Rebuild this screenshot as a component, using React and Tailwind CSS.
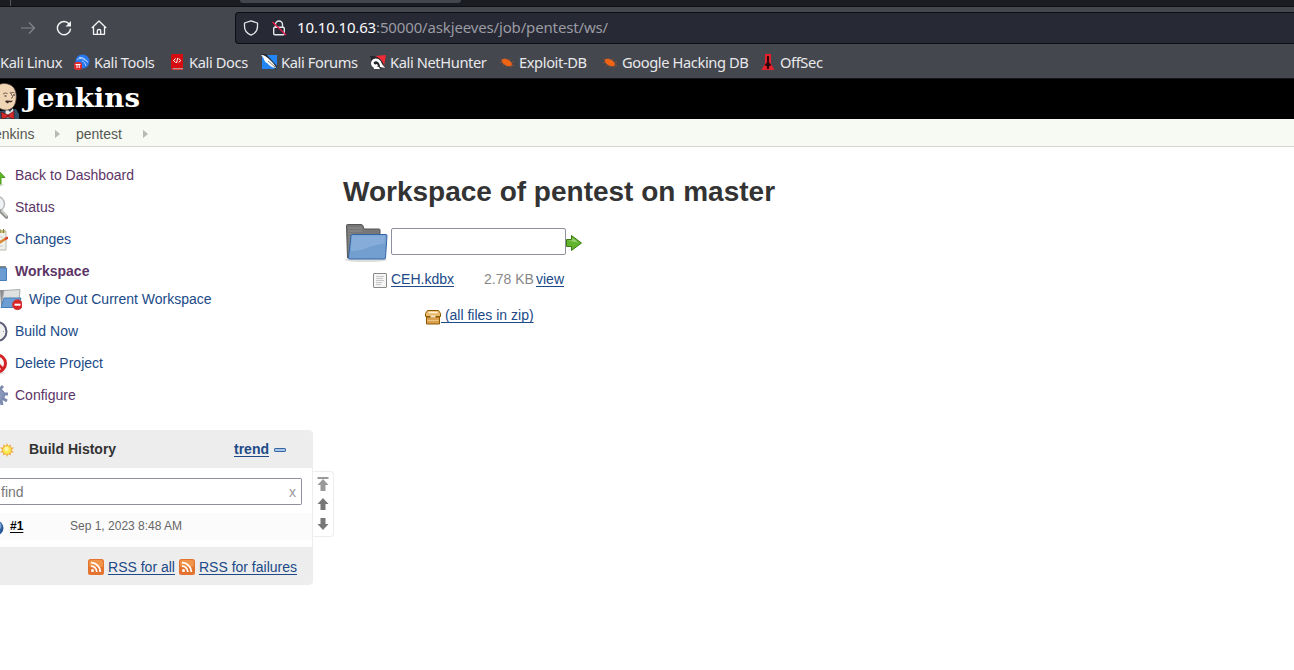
import React from "react";

const link = "text-[#204a87] underline decoration-1 underline-offset-2 [text-decoration-skip-ink:none]";

function ToolsIcon() {
  return (
    <svg className="size-4 shrink-0" viewBox="0 0 16 16">
      <circle cx="8.5" cy="7.5" r="7" fill="#2777ee" />
      <path d="M3 5.500c4-2 7-1 11 3M5 3.500c3-.5 6 1 8 4M8 7c2 .5 3 2 4 5" stroke="#c3dbff" strokeWidth=".9" fill="none" />
      <rect x="0" y="8" width="8" height="8" rx="3" fill="#e22a2e" />
      <path d="M1.500 10.500h5M3 10.500v3.500M5.200 10.500v3.500" stroke="#fff" strokeWidth="1" />
    </svg>
  );
}

function DocsIcon() {
  return (
    <svg className="size-4 shrink-0" viewBox="0 0 16 16">
      <path d="M2 1.500Q2 0 3.500 0H14v14H4q-1 0-1 1h11v1H3.500Q2 16 2 14.500z" fill="#d60d10" />
      <path d="M3.500 14.800H14" stroke="#e9b5b0" strokeWidth="1" />
      <path d="M6.700 4.500 4.500 6.500l2.200 2M9.600 4.500l2.200 2-2.200 2M8.800 4 7.500 9" stroke="#fff" strokeWidth="1" fill="none" />
    </svg>
  );
}

function ForumsIcon() {
  return (
    <svg className="size-4 shrink-0" viewBox="0 0 16 16">
      <path d="M1 1h15v14H1z" fill="#2386f4" />
      <path d="M0 0h5l11 12-1 4z" fill="#24262d" />
      <path d="M0 1c4 0 6 2 9 5 3 3 5 5 6 8-4 0-7-3-9-5C3 8 4 5 0 1z" fill="#fff" />
      <path d="M7 7l7 6" stroke="#4b5058" strokeWidth=".7" />
    </svg>
  );
}

function NetHunterIcon() {
  return (
    <svg className="size-4 shrink-0" viewBox="0 0 16 16">
      <path d="M0 2l5 0 8 2 1 10-10 1z" fill="#24262b" />
      <path d="M5 2l11-1-2 11C13 7 10 4 5 2z" fill="#ef2b35" />
      <path d="M1 9C2 3 10 3 12 10l3 4-5-1C10 8 6 6 4 8c-1 2 1 3 3 2l1 2c-4 3-7 1-7-3z" fill="#fff" />
      <path d="M3 12l6 1 1 2H4z" fill="#fff" />
    </svg>
  );
}

function BugIcon() {
  return (
    <svg className="size-4 shrink-0" viewBox="0 0 16 16">
      <ellipse cx="7.800" cy="8.500" rx="5.600" ry="3" transform="rotate(28 7.800 8.500)" fill="#ef6414" />
      <path d="M4 6.500 1.500 5M3.500 8 1 9M5.500 10.500 3.500 12M8.500 12l-1.500 1.500M7 5.500 6.500 4M10 7l1-2.500M12 9l3-1.500M12.500 11l2.500.5M11.500 12l1 1.500" stroke="#a8552b" strokeWidth=".7" />
    </svg>
  );
}

function OffSecIcon() {
  return (
    <svg className="size-4 shrink-0" viewBox="0 0 16 16">
      <path d="M5 0h6v9.500l3.500 6.500H1.500L5 9.500z" fill="#e3202b" />
      <path d="M7 2h2v6.500l2.500 2.500-2.500 1.500V15H7v-2.500L4.500 11 7 8.500z" fill="#28080b" />
    </svg>
  );
}

const bookmarks = [
  { label: "Kali Tools", icon: ToolsIcon, cls: "w-[95px]" },
  { label: "Kali Docs", icon: DocsIcon, cls: "w-[92px]" },
  { label: "Kali Forums", icon: ForumsIcon, cls: "w-[109px]" },
  { label: "Kali NetHunter", icon: NetHunterIcon, cls: "w-[129px]" },
  { label: "Exploit-DB", icon: BugIcon, cls: "w-[103px]" },
  { label: "Google Hacking DB", icon: BugIcon, cls: "w-[158px]" },
  { label: "OffSec", icon: OffSecIcon, cls: "w-[80px]" },
];

function BrowserChrome() {
  return (
    <div className="font-['Noto_Sans',sans-serif] text-[14.67px] text-[#e9e9ec]">
      <div className="flex h-1.5 bg-[#1b1c21]">
        <div className="h-1.5 w-[11px] border-r border-[#55575d]" />
        <div className="ml-[229px] h-[3px] w-[221px] rounded-b bg-[#43454c]" />
      </div>
      <div className="flex h-[42px] items-center border-t border-[#0e0f12] bg-[#44474e]">
        <svg className="ml-5 size-4 shrink-0" viewBox="0 0 16 16" fill="none" stroke="#85878c" strokeWidth="1.2">
          <path d="M1 8h13.500M9 2.500 14.500 8 9 13.500" />
        </svg>
        <svg className="ml-5 size-4 shrink-0" viewBox="0 0 16 16" fill="none" stroke="#f4f4f6" strokeWidth="1.4">
          <path d="M13.200 4A6.600 6.600 0 1 0 14.600 8.600" />
          <path d="M15 1v5.500H9.500z" fill="#f4f4f6" stroke="none" />
        </svg>
        <svg className="ml-[19px] size-4 shrink-0" viewBox="0 0 16 16" fill="none" stroke="#f4f4f6" strokeWidth="1.3" strokeLinejoin="round">
          <path d="M.8 8 8 1l7.200 7M2.500 7v7.300h11V7" />
          <path d="M6.300 14.300v-3.600q0-1.200 1.700-1.200t1.700 1.200v3.600" />
        </svg>
        <div className="ml-32 flex h-8 min-w-0 flex-1 items-center rounded-l border border-r-0 border-[#0d0e13] bg-[#272935]">
          <svg className="ml-[7px] size-4 shrink-0" viewBox="0 0 16 16" fill="none" stroke="#e6e6ea" strokeWidth="1.3" strokeLinejoin="round">
            <path d="M8 .8 14.500 3v3.500c0 4-2.500 7-6.500 8.700C4 13.500 1.500 10.500 1.500 6.500V3z" />
          </svg>
          <svg className="ml-3 size-4 shrink-0" viewBox="0 0 16 16" fill="none" stroke="#e6e6ea" strokeWidth="1.4">
            <path d="M4.500 7V4.500a3.500 3.500 0 0 1 7 0V7" />
            <rect x="2.700" y="7.300" width="10.600" height="7.500" rx="1.200" />
            <path d="M1.500 2 15 15" stroke="#e5194c" />
          </svg>
          <span className="ml-2.5 text-[15px] tracking-[-0.15px] whitespace-nowrap text-[#9b9ba2]">
            <span className="text-[#fbfbfe]">10.10.10.63</span>:50000/askjeeves/job/pentest/ws/
          </span>
        </div>
      </div>
      <div className="flex h-[31px] items-center border-b border-[#15161a] bg-[#44474e] pb-0.5 tracking-[-0.39px]">
        <span className="w-[74px] shrink-0 whitespace-nowrap">Kali Linux</span>
        {bookmarks.map(({ label, icon: Icon, cls }) => (
          <div key={label} className={`flex shrink-0 items-center gap-1 whitespace-nowrap ${cls}`}>
            <Icon />
            <span>{label}</span>
          </div>
        ))}
      </div>
    </div>
  );
}

function Logo() {
  return (
    <svg className="block h-10 w-[150px]" viewBox="0 0 150 40">
      <path d="M-3 40 0 32l9-1 7-1 3 5v5z" fill="#2f5068" />
      <path d="M6 29l4 4 3-4 1 10H5z" fill="#e9ecec" />
      <path d="M-5 12C-4 3 7 3 12 7c5 4 5 12 3 18-3 7-11 8-17 3z" fill="#f0d5b5" stroke="#54423a" strokeWidth=".8" />
      <path d="M3 15q2-2 4.500-.5M11 14q2-1.500 3.500 0M10 13l3 5-2 1.500" fill="none" stroke="#54423a" strokeWidth=".8" />
      <path d="M4.500 17h2M13 16h2" stroke="#222" strokeWidth="1.200" />
      <path d="M5 22c3-1.500 5 .5 8-.5-1 2-3 2-4 1.500l-1 1.500-2-1z" fill="#3f2c26" />
      <path d="M1 33l7 3v2l-6 2zM14 32l-6 4v2l6 2z" fill="#d62b2c" stroke="#651314" strokeWidth=".7" />
      <text x="24" y="28" textLength="116" lengthAdjust="spacingAndGlyphs" fill="#fff" fontSize="26" fontWeight="700" fontFamily="'DejaVu Serif', serif">Jenkins</text>
    </svg>
  );
}

function Crumb() {
  return (
    <svg className="h-2 w-[5px] shrink-0" viewBox="0 0 5 8">
      <path d="M0 0l5 4-5 4z" fill="#b5b8b3" />
    </svg>
  );
}

const taskIcons = {
  up: (
    <>
      <ellipse cx="12" cy="22" rx="8" ry="1.500" fill="#d8ddd5" />
      <path d="M12 5 21 14.500h-4V21H7v-6.500H3z" fill="#5cb524" stroke="#4f9a1d" />
    </>
  ),
  search: (
    <>
      <circle cx="13" cy="9" r="7.500" fill="#eef2f4" stroke="#b8bbb9" strokeWidth="1.500" />
      <path d="M16.500 16l6 6" stroke="#8c8e8a" strokeWidth="3.500" strokeLinecap="round" />
      <path d="M17 15.500l6 6" stroke="#d5d6d3" strokeWidth="1.300" />
    </>
  ),
  notepad: (
    <>
      <path d="M4 4h18v19H4z" fill="#f0f0ea" stroke="#b9b9b1" />
      <path d="M4 3h17v3H4z" fill="#c5bb7a" />
      <path d="M8 2v4M12 2v4M16 2v4M19.500 2v4" stroke="#857d3b" />
      <path d="M7 10h12M7 19h12" stroke="#c7c9c5" />
      <path d="M13 17 22 11.500" stroke="#d9862f" strokeWidth="2.500" />
      <path d="M21 12l3-1.500" stroke="#d94235" strokeWidth="2.500" />
    </>
  ),
  folder: (
    <>
      <path d="M2 5h8l2 2h10v12H2z" fill="#888" />
      <path d="M2 9h20.500v12.500H2z" fill="#6c9dd2" stroke="#467db9" />
    </>
  ),
  wipe: (
    <>
      <path d="M2 3h8l1 2h8v15H3z" fill="#8b8f8f" />
      <path d="M6 3.500l16-1-1 12H4z" fill="#dfe1e1" stroke="#a8acac" />
      <path d="M6 11h17l-2.500 9.500H3z" fill="#6d9ed3" stroke="#477fb9" />
      <circle cx="19.500" cy="17.700" r="5" fill="#d92426" stroke="#c04345" />
      <path d="M16.500 17.700h6" stroke="#fff" strokeWidth="2" />
    </>
  ),
  clock: (
    <>
      <circle cx="13" cy="12.500" r="9.500" fill="#f0f0ee" stroke="#5c5b78" strokeWidth="2" />
      <path d="M12 6v7l4 2M20 12.500h-1" stroke="#999" fill="none" />
    </>
  ),
  no: (
    <>
      <ellipse cx="13" cy="22" rx="8" ry="1.500" fill="#ddd" />
      <circle cx="13" cy="12.500" r="8.500" fill="#f6f6f5" stroke="#d52224" strokeWidth="3" />
      <path d="M8 7l11 11" stroke="#d52224" strokeWidth="3" />
    </>
  ),
  gear: (
    <>
      <circle cx="14" cy="12" r="6.500" fill="#8997bb" stroke="#66759c" />
      <path d="M14 2v4M17 17l1 5M20 11h4M16 6l3-3M18 15l5 3" stroke="#7d8bb0" strokeWidth="3" />
      <circle cx="13" cy="12" r="3" fill="#b9c3dc" />
    </>
  ),
};

const tasks = [
  { label: "Back to Dashboard", icon: "up", cls: "text-[#5c3566] h-8 -ml-4" },
  { label: "Status", icon: "search", cls: "text-[#5c3566] h-8 -ml-4" },
  { label: "Changes", icon: "notepad", cls: "text-[#204a87] h-8 -ml-4" },
  { label: "Workspace", icon: "folder", cls: "text-[#5c3566] h-7 pt-1 -ml-4 font-bold" },
  { label: "Wipe Out Current Workspace", icon: "wipe", cls: "text-[#204a87] h-8 -ml-0.5" },
  { label: "Build Now", icon: "clock", cls: "text-[#204a87] h-8 -ml-4" },
  { label: "Delete Project", icon: "no", cls: "text-[#204a87] h-8 -ml-4" },
  { label: "Configure", icon: "gear", cls: "text-[#5c3566] h-8 -ml-4" },
];

function RssIcon() {
  return (
    <svg className="size-4 shrink-0" viewBox="0 0 16 16">
      <rect width="16" height="16" rx="2.500" fill="#e57330" />
      <rect x="1" y="1" width="14" height="7" rx="2" fill="#f09449" />
      <circle cx="4.500" cy="11.500" r="1.500" fill="#fff" />
      <path d="M3 7.200a5.800 5.800 0 0 1 5.800 5.800M3 3.700A9.300 9.300 0 0 1 12.300 13" fill="none" stroke="#fff" strokeWidth="1.800" />
    </svg>
  );
}

function BuildHistory() {
  return (
    <div className="mt-[19px] flex items-start">
      <div className="w-[313px] shrink-0 rounded-r border-r border-[#ededed]">
        <div className="flex h-[38px] items-center rounded-tr bg-[#ededed] font-bold">
          <svg className="mt-0.5 -ml-px size-4 shrink-0" viewBox="0 0 16 16">
            <path d="M8 1l1.200 3 2.800-1.500L11.500 5.500 15 5.500 12.500 8 15 10.500l-3.500 0 .5 3L9.200 12 8 15l-1.200-3L4 13.500l.5-3-3.500 0L3.500 8 1 5.500l3.500 0L4 2.500 6.800 4z" fill="#f4a83c" />
            <circle cx="8" cy="8" r="4.300" fill="#fce94f" stroke="#eeb13d" strokeWidth=".7" />
            <circle cx="7.500" cy="7" r="2.200" fill="#fff6a6" />
          </svg>
          <span className="ml-3.5 w-[205px]">Build History</span>
          <span className={link}>trend</span>
          <svg className="mt-0.5 ml-[5px] h-1 w-3" viewBox="0 0 12 4">
            <rect x=".5" y=".5" width="11" height="3" rx=".6" fill="#a9c4e4" stroke="#3465a4" />
          </svg>
        </div>
        <div className="pt-2.5 pb-2">
          <div className="flex h-[27px] w-[302px] items-center justify-between rounded-r-xs border border-l-0 border-[#8f8f9d] pr-[5px] pl-px text-[#777]">
            <span>find</span>
            <span className="text-[#999]">x</span>
          </div>
        </div>
        <div className="mb-[7px] flex h-[27px] items-center bg-[#fbfbfb] text-xs">
          <svg className="mt-0.5 -ml-3 size-4 shrink-0" viewBox="0 0 16 16">
            <circle cx="8" cy="8" r="7.500" fill="#2b5a99" />
            <circle cx="9" cy="6" r="4.500" fill="#7ba3d6" />
          </svg>
          <span className="ml-1.5 w-[60px] pb-0.5 font-bold text-black underline underline-offset-2 [text-decoration-skip-ink:none]">#1</span>
          <span className="pb-0.5 text-[#666]">Sep 1, 2023 8:48 AM</span>
        </div>
        <div className="flex h-[38px] items-center justify-end gap-1 rounded-br bg-[#ededed] pt-0.5 pr-[15px]">
          <RssIcon />
          <span className={link}>RSS for all</span>
          <RssIcon />
          <span className={link}>RSS for failures</span>
        </div>
      </div>
      <div className="mt-[41px] flex h-[66px] w-[21px] flex-col items-center rounded-r border border-l-0 border-[#ededed] pt-[5px]">
        <svg className="h-[54px] w-3" viewBox="0 0 12 54" fill="#777">
          <path d="M.5 0h11v2H.500zM6 2l5.500 6H8.500v6h-5V8H.500z" fill="#999" />
          <path d="M6 21l5.500 6H8.500v6h-5v-6H.500zM3.500 41h5v6h3L6 53 .500 47h3z" />
        </svg>
      </div>
    </div>
  );
}

function Workspace() {
  return (
    <main className="ml-[9px] pt-[26px]">
      <h1 className="h-[37px] text-[28px] leading-[37px] font-bold whitespace-nowrap text-[#333]">Workspace of pentest on master</h1>
      <div className="mt-3 flex h-[39px] items-center">
        <svg className="mt-1 ml-px h-10 w-[47px] shrink-0" viewBox="0 0 47 40">
          <ellipse cx="22" cy="36" rx="21" ry="2" fill="#ddd" />
          <path d="M2.500 1.500q0-1 1-1h14q1 0 1.500 1.500l1 3h15q1 0 1 1V34H3.500z" fill="#777" stroke="#555" />
          <path d="M4 4h14M4 7h14M4 10h5M4 13h4M4 16h4M4 19h3M4 22h3M4 25h3" stroke="#909090" />
          <path d="M8 10.500h34q1 0 1 1L41.500 34q0 1-1.500 1H6q-1.500 0-1.500-1.500L7 11.500q0-1 1-1z" fill="#729fcf" stroke="#3465a4" />
          <path d="M8 11.500h33l-.5 8Q30 21 23 24T7 27z" fill="#86add9" />
        </svg>
        <div className="h-[27px] w-[175px] rounded-xs border border-[#8f8f9d] bg-white" />
        <svg className="mt-0.5 size-4" viewBox="0 0 16 16">
          <path d="M.5 4.500h5v-4L15.500 8l-10 7.500v-4h-5z" fill="#63b32c" stroke="#3c7c12" />
          <path d="M1.500 5.500h5V3L12 7.500z" fill="#a0d57e" />
        </svg>
      </div>
      <div className="mt-1.5 flex h-6 items-center">
        <svg className="mt-[3px] ml-[30px] h-[15px] w-3.5" viewBox="0 0 14 15">
          <rect x=".5" y=".5" width="13" height="14" rx=".5" fill="#f5f5f5" stroke="#888a85" />
          <path d="M3 3.500h8M3 5.500h7M3 7.500h8M3 9.500h6M3 11.500h5" stroke="#b9b9b9" strokeWidth=".8" />
        </svg>
        <span className="ml-1 w-[93px]">
          <span className={link}>CEH.kdbx</span>
        </span>
        <span className="w-[52px] whitespace-nowrap text-[#888]">2.78 KB</span>
        <span className={link}>view</span>
      </div>
      <div className="mt-3 ml-[82px] flex h-6 items-center">
        <svg className="mt-1 h-[15px] w-4" viewBox="0 0 16 15">
          <path d="M2.500.5h11l2 3v3h-15v-3z" fill="#e9b96e" stroke="#8f5902" />
          <path d="M1.500 7h13v7h-13z" fill="#daa04d" stroke="#8f5902" />
          <path d="M3.500 2.500h9" stroke="#fff1d0" strokeWidth="1.500" />
          <path d="M5.500 6.500h5" stroke="#f3e6c8" strokeWidth="2" />
          <path d="M2.500 10.500h11" stroke="#edc582" />
        </svg>
        <span className={`whitespace-pre ${link}`}>{" (all files in zip)"}</span>
      </div>
    </main>
  );
}

export default function App() {
  return (
    <div className="h-[670px] w-[1294px] overflow-hidden bg-white font-['Liberation_Sans',sans-serif] text-sm text-[#333]">
      <BrowserChrome />
      <header className="h-10 bg-black">
        <Logo />
      </header>
      <nav className="flex h-7 items-center border-b border-[#d3d7cf] bg-[#f6faf2] pt-0.5 text-[#555753]">
        <span className="-ml-[13px] w-[68px] shrink-0">Jenkins</span>
        <Crumb />
        <span className="ml-4 w-[67px]">pentest</span>
        <Crumb />
      </nav>
      <div className="flex">
        <aside className="w-[334px] shrink-0 pt-3">
          {tasks.map(({ label, icon, cls }) => (
            <div key={label} className={`flex items-center gap-[7px] ${cls}`}>
              <svg className="size-6 shrink-0" viewBox="0 0 24 24" fill="none">
                {taskIcons[icon]}
              </svg>
              <span className="whitespace-nowrap">{label}</span>
            </div>
          ))}
          <BuildHistory />
        </aside>
        <Workspace />
      </div>
    </div>
  );
}
